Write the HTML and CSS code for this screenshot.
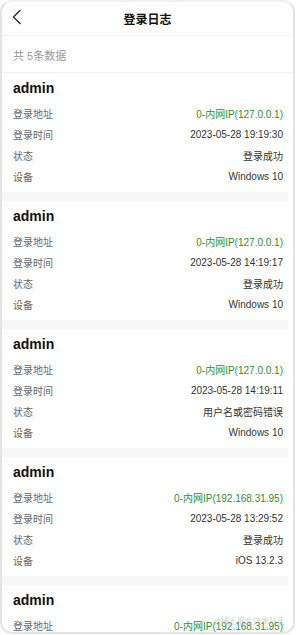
FILE: index.html
```html
<!DOCTYPE html>
<html lang="zh-CN">
<head>
    <meta charset="UTF-8">
    <meta name="viewport" content="width=device-width, initial-scale=1.0">
    <title>登录日志</title>
    <link rel="stylesheet" href="styles.css">
</head>
<body>
    <div class="phone">
        <div class="nav">
            <span class="back">
                <svg width="10" height="16" viewBox="0 0 10 16"><path d="M8.5 1 L1.5 8 L8.5 15" fill="none" stroke="#222" stroke-width="1.3"/></svg>
            </span>
            <h1>登录日志</h1>
        </div>

        <div class="total">共 5条数据</div>

        <div class="list">
            <div class="log-card">
                <h2>admin</h2>
                <div class="row"><span class="label">登录地址</span><span class="value ip">0-内网IP(127.0.0.1)</span></div>
                <div class="row"><span class="label">登录时间</span><span class="value">2023-05-28 19:19:30</span></div>
                <div class="row"><span class="label">状态</span><span class="value">登录成功</span></div>
                <div class="row"><span class="label">设备</span><span class="value">Windows 10</span></div>
            </div>
            <div class="log-card">
                <h2>admin</h2>
                <div class="row"><span class="label">登录地址</span><span class="value ip">0-内网IP(127.0.0.1)</span></div>
                <div class="row"><span class="label">登录时间</span><span class="value">2023-05-28 14:19:17</span></div>
                <div class="row"><span class="label">状态</span><span class="value">登录成功</span></div>
                <div class="row"><span class="label">设备</span><span class="value">Windows 10</span></div>
            </div>
            <div class="log-card">
                <h2>admin</h2>
                <div class="row"><span class="label">登录地址</span><span class="value ip">0-内网IP(127.0.0.1)</span></div>
                <div class="row"><span class="label">登录时间</span><span class="value">2023-05-28 14:19:11</span></div>
                <div class="row"><span class="label">状态</span><span class="value">用户名或密码错误</span></div>
                <div class="row"><span class="label">设备</span><span class="value">Windows 10</span></div>
            </div>
            <div class="log-card">
                <h2>admin</h2>
                <div class="row"><span class="label">登录地址</span><span class="value ip">0-内网IP(192.168.31.95)</span></div>
                <div class="row"><span class="label">登录时间</span><span class="value">2023-05-28 13:29:52</span></div>
                <div class="row"><span class="label">状态</span><span class="value">登录成功</span></div>
                <div class="row"><span class="label">设备</span><span class="value">iOS 13.2.3</span></div>
            </div>
            <div class="log-card">
                <h2>admin</h2>
                <div class="row"><span class="label">登录地址</span><span class="value ip">0-内网IP(192.168.31.95)</span></div>
            </div>
        </div>

        <div class="watermark">@稀土掘金技术社区</div>
    </div>
</body>
</html>
```

FILE: styles.css
```css
body {
    margin: 0;
    background: #fff;
    font-family: "Liberation Sans", "Noto Sans CJK SC", sans-serif;
    color: #333;
}

.phone {
    position: relative;
    width: 295px;
    height: 634px;
    box-sizing: border-box;
    border: 2px solid #e4e4e4;
    border-top-color: #f0f0f0;
    border-radius: 12px;
    overflow: hidden;
    background: #fff;
}

.nav {
    position: relative;
    height: 33px;
    display: flex;
    align-items: center;
    justify-content: center;
    border-bottom: 1px solid #f3f3f3;
}

.nav h1 {
    margin: 0;
    font-size: 12px;
    font-weight: 700;
    color: #111;
}

.back {
    position: absolute;
    left: 10px;
    top: 7px;
    display: flex;
}

.total {
    height: 36px;
    line-height: 41px;
    padding-left: 11px;
    font-size: 11px;
    color: #999;
    border-bottom: 1px solid #f2f2f2;
}

.log-card {
    margin: 0 5px 0 0;
    padding: 5px 5px 5px 11px;
    border-bottom: 9px solid #f7f7f7;
}

.log-card h2 {
    margin: 0 0 5px;
    font-size: 14px;
    line-height: 20px;
    font-weight: 700;
    color: #111;
}

.row {
    display: flex;
    justify-content: space-between;
    align-items: center;
    height: 21px;
    font-size: 10px;
}

.label {
    color: #666;
}

.value {
    color: #333;
}

.value.ip {
    color: #2b922b;
}

.watermark {
    position: absolute;
    right: 8px;
    bottom: 6px;
    font-size: 8px;
    color: rgba(170, 170, 170, 0.55);
}
```
